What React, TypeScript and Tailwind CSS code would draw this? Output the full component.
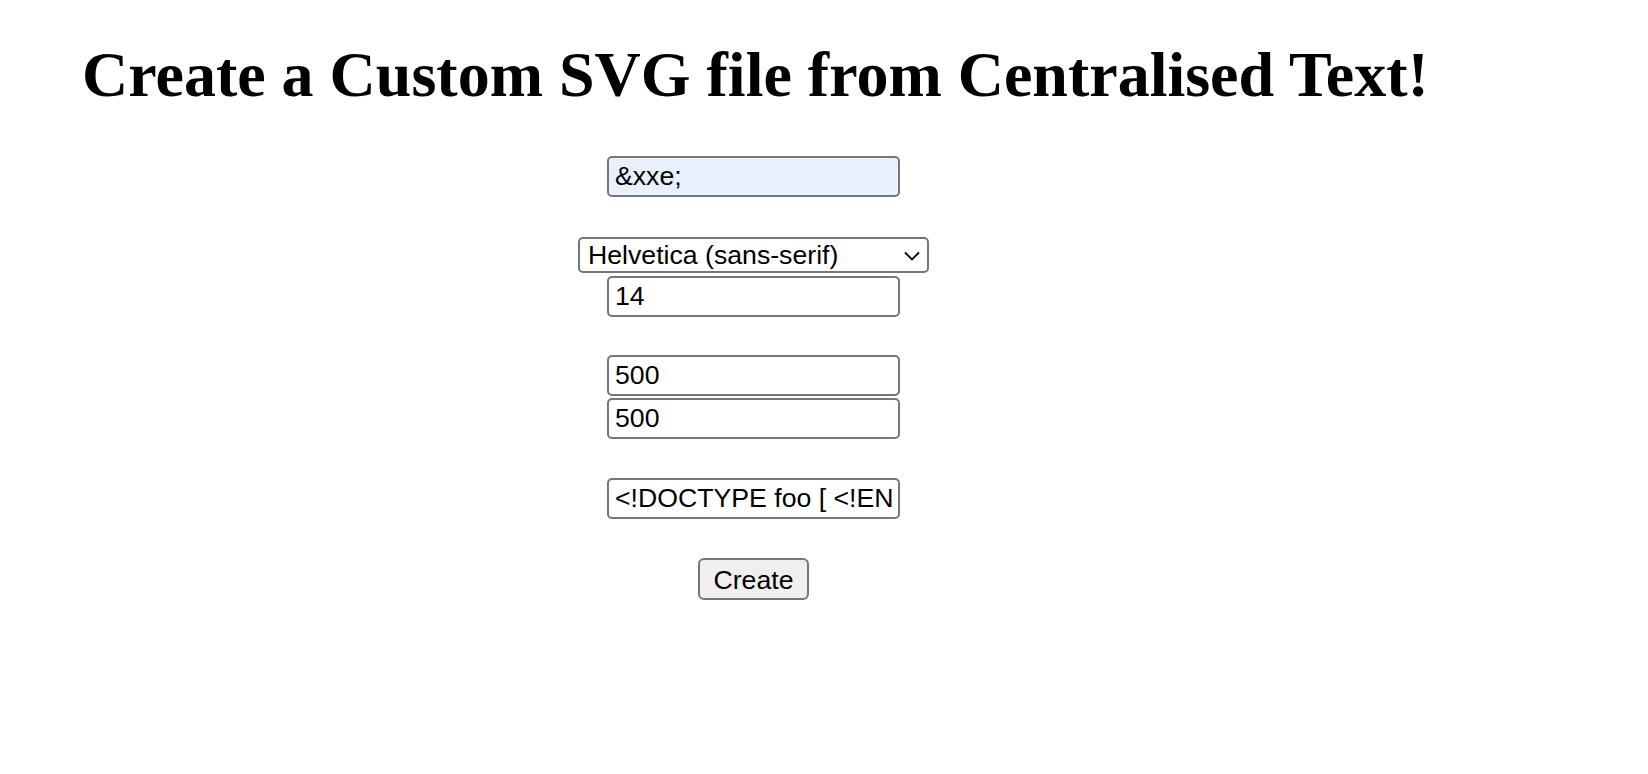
import { useState } from "react";

const fieldBase =
  "h-[41px] w-[293px] rounded-[5px] border-2 border-[#767676] pl-[6px] pr-[4px] text-[26.67px] text-black outline-none font-['Liberation_Sans',Arial,sans-serif]";

const fonts = [
  "Helvetica (sans-serif)",
  "Times New Roman (serif)",
  "Courier New (monospace)",
  "Arial (sans-serif)",
];

const App = () => {
  const [font, setFont] = useState(fonts[0]);

  return (
    <div className="min-h-screen bg-white text-black">
      {/* 見出し */}
      <h1 className="m-0 pl-[82px] pt-[39px] text-[64px] font-bold leading-[72px] font-['Liberation_Serif','Times_New_Roman',serif]">
        Create a Custom SVG file from Centralised Text!
      </h1>

      {/* フォーム */}
      <form
        className="mt-[45px] flex w-[1507px] flex-col items-center"
        onSubmit={(e) => e.preventDefault()}
      >
        <input
          type="text"
          defaultValue="&xxe;"
          className={`${fieldBase} bg-[#e8f0fe]`}
        />

        <div className="relative mt-[40px]">
          <select
            value={font}
            onChange={(e) => setFont(e.target.value)}
            className="h-[36px] w-[351px] appearance-none rounded-[5px] border-2 border-[#767676] bg-white pl-[8px] pr-[36px] text-[26.67px] leading-[32px] text-black outline-none font-['Liberation_Sans',Arial,sans-serif]"
          >
            {fonts.map((f) => (
              <option key={f} value={f}>
                {f}
              </option>
            ))}
          </select>
          <svg
            className="pointer-events-none absolute right-[9px] top-[14px]"
            width="16"
            height="10"
            viewBox="0 0 16 10"
            fill="none"
          >
            <path d="M1 1.5 L8 8.5 L15 1.5" stroke="#000" strokeWidth="1.8" />
          </svg>
        </div>

        <input type="text" defaultValue="14" className={`${fieldBase} mt-[3px] bg-white`} />

        <input type="text" defaultValue="500" className={`${fieldBase} mt-[38px] bg-white`} />
        <input type="text" defaultValue="500" className={`${fieldBase} mt-[2px] bg-white`} />

        <input
          type="text"
          defaultValue={'<!DOCTYPE foo [ <!ENTITY xxe SYSTEM "file:///etc/passwd" > ]>'}
          className={`${fieldBase} mt-[39px] bg-white`}
        />

        <button
          type="submit"
          className="mt-[39px] h-[42px] w-[111px] rounded-[6px] border-2 border-[#767676] bg-[#efefef] text-[26.67px] text-black font-['Liberation_Sans',Arial,sans-serif]"
        >
          Create
        </button>
      </form>
    </div>
  );
};

export default App;
